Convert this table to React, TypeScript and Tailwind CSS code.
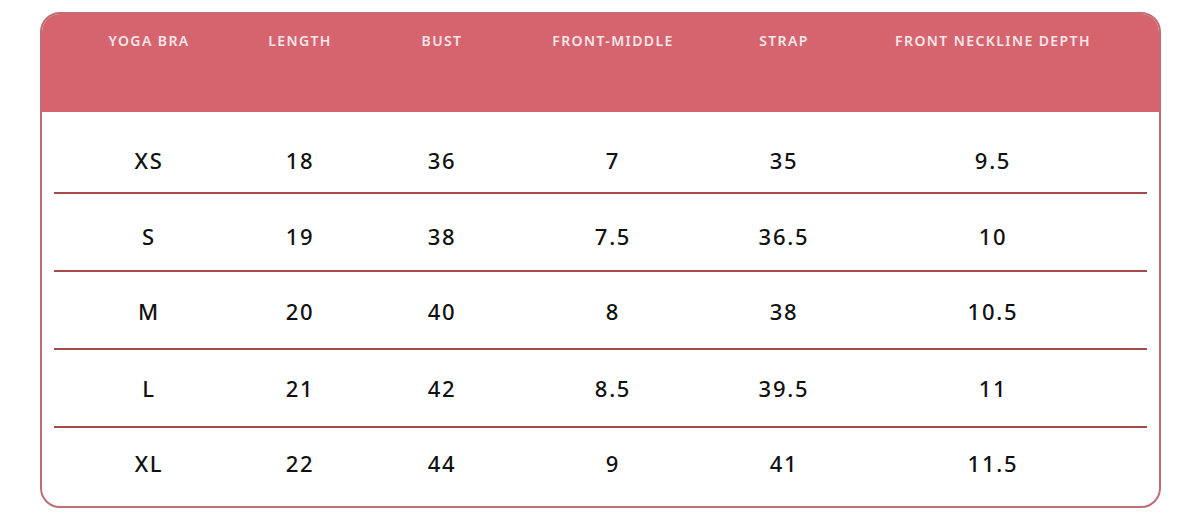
import React from 'react';

const headers = ['YOGA BRA', 'LENGTH', 'BUST', 'FRONT-MIDDLE', 'STRAP', 'FRONT NECKLINE DEPTH'];

const rows = [
  ['XS', '18', '36', '7', '35', '9.5'],
  ['S', '19', '38', '7.5', '36.5', '10'],
  ['M', '20', '40', '8', '38', '10.5'],
  ['L', '21', '42', '8.5', '39.5', '11'],
  ['XL', '22', '44', '9', '41', '11.5'],
];

const cols = 'grid grid-cols-[150px_152px_132px_210px_132px_286px] pl-[32px] pr-[23px]';

export default function App() {
  return (
    <div className="w-[1200px] h-[523px] bg-white pt-[12px] pl-[40px]" style={{ fontFamily: '"Noto Sans", "Open Sans", sans-serif' }}>
      <div className="w-[1121px] h-[496px] rounded-[20px] border-2 border-[#bd6f75] overflow-hidden flex flex-col">
        <div className={`${cols} h-[98px] bg-[#d6646f] items-start pt-[16px]`}>
          {headers.map((h) => (
            <div key={h} className="text-center text-[14px] font-semibold tracking-[0.1em] text-[#f7e6e8]">
              {h}
            </div>
          ))}
        </div>
        <div className="flex-1 flex flex-col">
          {rows.map((r, i) => {
            const last = i === rows.length - 1;
            const size =
              i === 0 ? 'h-[82px] pt-[16px]'
              : last ? 'flex-1 pt-[19px]'
              : i === 1 ? 'h-[78px] pt-[8px]'
              : i === 2 ? 'h-[78px] pt-[2px]'
              : 'h-[78px] pt-0';
            return (
              <div key={r[0]} className={`flex flex-col ${size}`}>
                <div className={`${cols} flex-1 ${last ? 'items-start' : 'items-center'}`}>
                  {r.map((c, j) => (
                    <div key={j} className="text-center text-[22px] font-medium tracking-[0.08em] text-[#111111]">
                      {c}
                    </div>
                  ))}
                </div>
                {!last && <div className="mx-[12px] h-[2px] bg-[#a94b4b]" />}
              </div>
            );
          })}
        </div>
      </div>
    </div>
  );
}
